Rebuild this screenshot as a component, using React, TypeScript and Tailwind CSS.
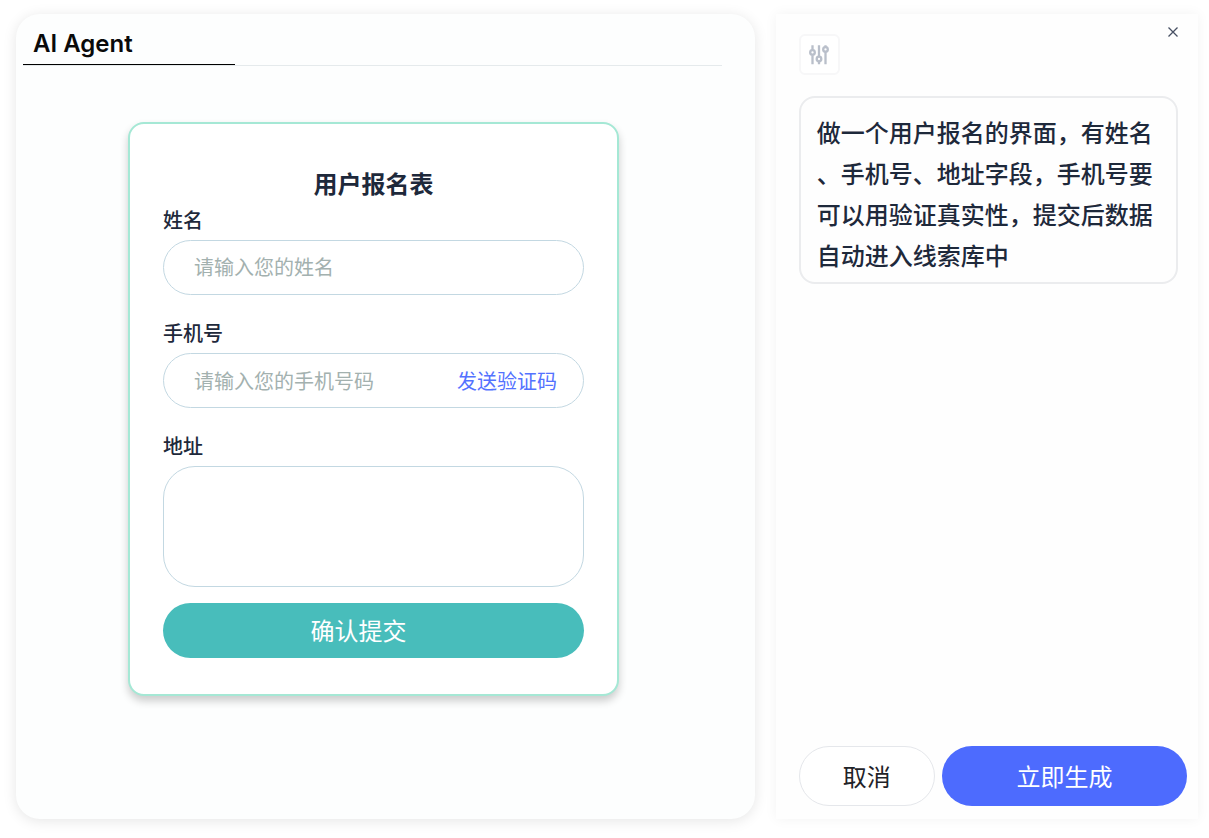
import React from "react";

function SlidersIcon() {
  return (
    <svg width="20" height="20" viewBox="0 0 20 20" fill="none" stroke="#b9bfca" strokeWidth="2.3" strokeLinecap="butt">
      <path d="M3.5 0.3V5M3.5 10.2V19.3" />
      <circle cx="3.5" cy="7.4" r="2.3" />
      <path d="M10 0.3V11.5M10 16.4V19.3" />
      <circle cx="10" cy="14" r="2.3" />
      <path d="M16.5 0.3V2M16.5 6.8V19.3" />
      <circle cx="16.5" cy="4.4" r="2.3" />
    </svg>
  );
}

function CloseIcon() {
  return (
    <svg width="10" height="10" viewBox="0 0 10 10" fill="none" stroke="#475063" strokeWidth="1.3">
      <path d="M0.5 0.5L9.5 9.5M9.5 0.5L0.5 9.5" />
    </svg>
  );
}

const labelClass = "mb-1 block text-xl leading-[30px] font-medium text-[#1e293b]";
const fieldClass =
  "block w-full border border-[#c3d8e2] bg-transparent px-[30px] text-xl text-[#1e293b] outline-none placeholder:text-[#a3b1af]";

function SignupForm() {
  return (
    <form
      className="w-full max-w-[491px] rounded-2xl border-2 border-[#a5e8d5] bg-white px-[33px] pt-[43px] pb-9 shadow-[0_5px_8px_rgba(0,0,0,0.2)]"
      onSubmit={(e) => e.preventDefault()}
    >
      <h2 className="mb-[3px] text-center text-2xl leading-9 font-bold text-[#1e293b]">用户报名表</h2>
      <div className="mb-6">
        <label htmlFor="name" className={labelClass}>姓名</label>
        <input id="name" type="text" placeholder="请输入您的姓名" className={`${fieldClass} h-[55px] rounded-full`} />
      </div>
      <div className="mb-6">
        <label htmlFor="phone" className={labelClass}>手机号</label>
        <div className="flex h-[55px] items-center rounded-full border border-[#c3d8e2] pt-[2px] pr-[26px] pl-[30px]">
          <input
            id="phone"
            type="tel"
            placeholder="请输入您的手机号码"
            className="min-w-0 flex-1 bg-transparent text-xl text-[#1e293b] outline-none placeholder:text-[#a3b1af]"
          />
          <button type="button" className="shrink-0 text-xl text-[#5472ff]">发送验证码</button>
        </div>
      </div>
      <div className="mb-4">
        <label htmlFor="address" className={labelClass}>地址</label>
        <textarea id="address" className={`${fieldClass} h-[121px] resize-none rounded-[32px] py-4`} />
      </div>
      <button type="submit" className="block h-[55px] w-full rounded-full bg-[#48bdbb] pt-[2px] pr-[30px] text-2xl text-white">
        确认提交
      </button>
    </form>
  );
}

export default function App() {
  return (
    <div className="grid min-h-screen grid-cols-[minmax(0,7fr)_minmax(0,4fr)] gap-[21px] bg-white pt-[14px] pr-[11px] pb-[19px] pl-4 font-['Inter','Noto_Sans_CJK_SC',sans-serif]">
      <main className="flex flex-col rounded-3xl bg-[#fdfefe] shadow-[0_2px_14px_rgba(0,0,0,0.1)]">
        <header className="mr-[33px] ml-[7px] flex border-b border-[#e5eaec]">
          <h1 className="w-[212px] border-b border-black pt-3 pb-[2px] pl-[10px] text-2xl leading-9 font-semibold text-[#0a0a0a]">
            AI Agent
          </h1>
        </header>
        <div className="flex flex-1 items-start justify-center px-6 pt-14 pb-14">
          <div className="flex w-full justify-center pr-6">
            <SignupForm />
          </div>
        </div>
      </main>

      <aside className="flex flex-col bg-[#fefefe] pr-[11px] pb-[13px] pl-[23px] shadow-[0_0_12px_rgba(0,0,0,0.05)]">
        <div className="flex items-start justify-between">
          <button
            type="button"
            aria-label="设置"
            className="mt-[20px] flex size-[41px] items-center justify-center rounded-md border-2 border-[#f7f7f8] bg-white"
          >
            <SlidersIcon />
          </button>
          <button type="button" aria-label="关闭" className="mt-2 mr-1 flex size-5 items-center justify-center">
            <CloseIcon />
          </button>
        </div>
        <p className="mt-[21px] mr-[9px] rounded-2xl border-2 border-[#ebecee] bg-[#fefefe] px-4 pt-[15px] pb-[5px] text-2xl leading-[41px] font-medium text-[#1e293b] [line-break:anywhere]">
          做一个用户报名的界面，有姓名、手机号、地址字段，手机号要可以用验证真实性，提交后数据自动进入线索库中
        </p>
        <footer className="mt-auto flex gap-[7px]">
          <button type="button" className="h-[60px] w-[136px] shrink-0 rounded-full border border-[#e5e7eb] bg-white pt-[3px] text-2xl text-[#1f2328]">
            取消
          </button>
          <button type="button" className="h-[60px] min-w-0 flex-1 rounded-full bg-[#4d6bfe] pt-[3px] text-2xl text-white">
            立即生成
          </button>
        </footer>
      </aside>
    </div>
  );
}
